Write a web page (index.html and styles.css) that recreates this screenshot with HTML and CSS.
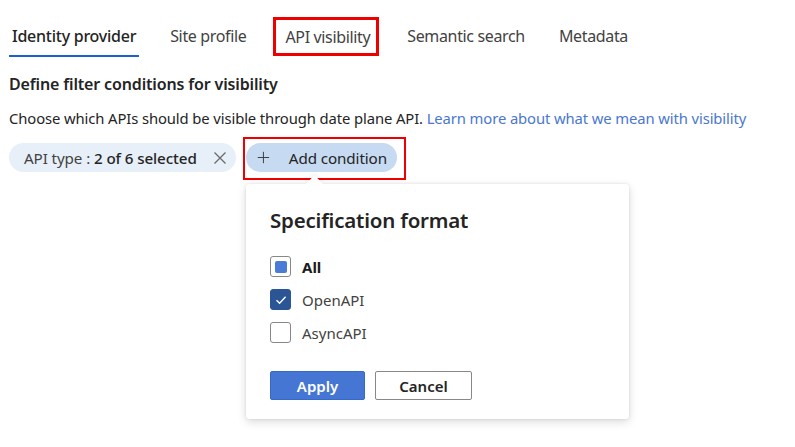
FILE: index.html
```html
<!DOCTYPE html>
<html>
<head>
<meta charset="utf-8">
<link rel="stylesheet" href="styles.css">
</head>
<body>
<div class="page">
  <nav class="tabs">
    <div class="tab active">Identity provider</div>
    <div class="tab">Site profile</div>
    <div class="tab highlighted">API visibility</div>
    <div class="tab">Semantic search</div>
    <div class="tab">Metadata</div>
  </nav>
  <h2 class="section-title">Define filter conditions for visibility</h2>
  <p class="desc">Choose which APIs should be visible through date plane API. <a class="link" href="#">Learn more about what we mean with visibility</a></p>
  <div class="chips">
    <div class="chip filter">
      <span>API type : <span class="val">2 of 6 selected</span></span>
      <svg class="x" width="14" height="14" viewBox="0 0 14 14"><path d="M1.5 1.5 L12.5 12.5 M12.5 1.5 L1.5 12.5" stroke="#6b6b6b" stroke-width="1.3" fill="none"/></svg>
    </div>
    <div class="add-wrap">
      <div class="chip add">
        <svg class="plus" width="17" height="17" viewBox="0 0 17 17"><path d="M8.5 1 V16 M1 8.5 H16" stroke="#3d3d3d" stroke-width="1.3" fill="none"/></svg>
        <span>Add condition</span>
      </div>
      <div class="popup">
        <div class="beak"></div>
        <h3 class="popup-title">Specification format</h3>
        <div class="options">
          <label class="opt">
            <span class="cb partial"><span class="dot"></span></span>
            <span class="opt-label bold">All</span>
          </label>
          <label class="opt">
            <span class="cb checked"><svg width="14" height="14" viewBox="0 0 14 14"><path d="M2.5 7.2 L5.6 10.2 L11.6 3.8" stroke="#fff" stroke-width="1.4" fill="none"/></svg></span>
            <span class="opt-label">OpenAPI</span>
          </label>
          <label class="opt">
            <span class="cb"></span>
            <span class="opt-label">AsyncAPI</span>
          </label>
        </div>
        <div class="actions">
          <button class="btn primary">Apply</button>
          <button class="btn">Cancel</button>
        </div>
      </div>
    </div>
  </div>
</div>
</body>
</html>
```

FILE: styles.css
```css
* { box-sizing: border-box; }
html, body { margin: 0; padding: 0; background: #fff; }
body {
  font-family: "Noto Sans", "Open Sans", sans-serif;
  color: #242424;
  width: 795px;
  height: 447px;
  overflow: hidden;
}
.page {
  padding: 0 0 0 9px;
}
.tabs {
  display: flex;
  align-items: stretch;
  height: 57px;
  gap: 28px;
  padding-top: 17px;
}
.tab {
  position: relative;
  padding: 0 3px;
  height: 40px;
  line-height: 38px;
  font-size: 16px;
  color: #424242;
  letter-spacing: -0.35px;
  white-space: nowrap;
}
.tab.active {
  color: #242424;
  font-weight: 500;
  letter-spacing: -0.25px;
  border-bottom: 2px solid #1c5fd1;
}
.tab.highlighted {
  margin: 0 -3px 0 -4px;
  padding: 0 6px 0 9px;
  height: 39px;
  line-height: 35px;
  border: 3px solid #ee0000;
}
.section-title {
  margin: 15px 0 0 0;
  font-size: 16px;
  font-weight: 600;
  line-height: 24px;
  letter-spacing: -0.15px;
  color: #242424;
}
.desc {
  margin: 11px 0 0 0;
  font-size: 14.8px;
  line-height: 22px;
  letter-spacing: -0.1px;
  color: #242424;
}
.link { color: #4a77d2; text-decoration: none; }
.chips {
  display: flex;
  align-items: flex-start;
  margin-top: 14px;
  gap: 10px;
}
.chip {
  display: flex;
  align-items: center;
  height: 29px;
  border-radius: 15px;
  font-size: 15.2px;
  letter-spacing: -0.1px;
  white-space: nowrap;
}
.chip.filter {
  background: #e7eff9;
  padding: 0 9px 0 15px;
  gap: 12px;
  width: 227px;
  justify-content: space-between;
  color: #424242;
}
.chip.filter .val { color: #242424; font-weight: 500; }
.add-wrap {
  position: relative;
  display: flex;
  flex-direction: column;
}
.add-wrap::before {
  content: "";
  position: absolute;
  left: -3px; top: -6px;
  width: 159px; height: 39px;
  border: 2.5px solid #ee0000;
  pointer-events: none;
}
.chip.add {
  background: #c6daf2;
  padding: 0 10px 0 11px;
  gap: 19px;
  width: 151px;
  color: #242424;
}
.popup {
  position: relative;
  margin-top: 12px;
  width: 383px;
  background: #fff;
  border-radius: 3px;
  box-shadow: 0 0 3px rgba(0,0,0,0.10), 0 3px 10px rgba(0,0,0,0.14);
  padding: 16px 24px 19px 24px;
}
.beak {
  position: absolute;
  left: 62px; top: -6px;
  width: 13px; height: 13px;
  background: #fff;
  transform: rotate(45deg);
  box-shadow: -2px -2px 4px rgba(0,0,0,0.05);
}
.popup-title {
  margin: 0;
  font-size: 20.5px;
  font-weight: 600;
  line-height: 40px;
  letter-spacing: -0.2px;
  color: #242424;
}
.options {
  margin-top: 16px;
  display: flex;
  flex-direction: column;
  gap: 12px;
}
.opt {
  display: flex;
  align-items: center;
  gap: 11px;
  height: 21px;
  font-size: 15px;
  color: #424242;
}
.opt-label.bold { font-weight: 700; color: #1b1b1b; }
.cb {
  width: 21px; height: 21px;
  border: 1px solid #8a8886;
  border-radius: 3px;
  background: #fff;
  display: flex;
  align-items: center;
  justify-content: center;
}
.cb .dot {
  width: 12px; height: 12px;
  background: #4a7bd7;
  border-radius: 2px;
}
.cb.checked {
  background: #2c5595;
  border-color: #2c5595;
}
.actions {
  margin-top: 28px;
  display: flex;
  gap: 10px;
}
.btn {
  font-family: inherit;
  height: 29px;
  width: 97px;
  border: 1px solid #8a8886;
  border-radius: 2px;
  background: #fff;
  font-size: 15px;
  font-weight: 600;
  color: #242424;
  padding: 0;
}
.btn.primary {
  width: 95px;
  background: #4576d4;
  border-color: #3769c9;
  color: #fff;
}
```
